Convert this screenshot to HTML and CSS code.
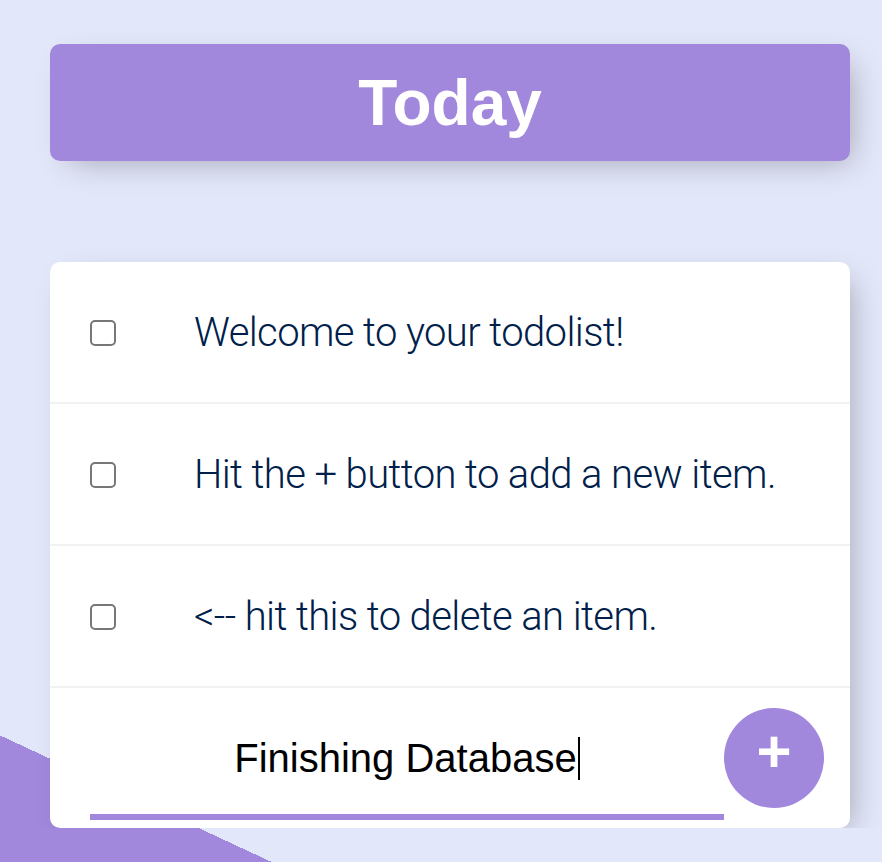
FILE: index.html
```html
<!DOCTYPE html>
<html lang="en">
<head>
    <meta charset="UTF-8">
    <meta name="viewport" content="width=device-width, initial-scale=1.0">
    <title>To Do List</title>
    <link rel="stylesheet" href="styles.css">
</head>
<body>

    <div class="box" id="heading">
        <h1>Today</h1>
    </div>

    <div class="box">
        <div class="item">
            <input type="checkbox">
            <p>Welcome to your todolist!</p>
        </div>
        <div class="item">
            <input type="checkbox">
            <p>Hit the + button to add a new item.</p>
        </div>
        <div class="item">
            <input type="checkbox">
            <p>&lt;-- hit this to delete an item.</p>
        </div>

        <form class="item new-item" action="/" method="post">
            <!-- campo de texto con el cursor al final -->
            <div class="new-text"><span>Finishing Database</span><span class="caret"></span></div>
            <button type="submit" name="button">+</button>
        </form>
    </div>

</body>
</html>
```

FILE: styles.css
```css
html {
    background-color: #e3e7fa;
    background-image: linear-gradient(25deg, #a188dd 50%, #e3e7fa 50%);
    background-size: 882px 1882px;
    background-repeat: no-repeat;
    font-family: 'Roboto', 'Helvetica Neue', sans-serif;
}

body {
    margin: 0;
    padding: 44px 0 0 50px;
}

.box {
    width: 800px;
    background: #fff;
    border-radius: 10px;
    box-shadow: 10px 10px 30px -10px rgba(0, 0, 0, 0.3);
}

.box + .box {
    margin-top: 101px;
}

#heading {
    background-color: #a188dd;
    text-align: center;
}

h1 {
    margin: 0;
    padding: 21px 0 19px;
    line-height: 77px;
    font-family: 'Liberation Sans', Arial, sans-serif;
    font-size: 64px;
    font-weight: bold;
    color: #fff;
}

.item {
    min-height: 140px;
    display: flex;
    align-items: center;
    border-bottom: 2px solid #f1f1f1;
}

.item:last-child {
    border-bottom: 0;
}

input[type="checkbox"] {
    appearance: none;
    -webkit-appearance: none;
    width: 26px;
    height: 26px;
    margin: 2px 40px 0 40px;
    border: 2px solid #777;
    border-radius: 5px;
    box-sizing: border-box;
    background: #fff;
}

p {
    margin: 0;
    padding: 0 40px 0 38px;
    font-size: 40px;
    font-weight: 300;
    letter-spacing: -0.6px;
    color: #00204a;
}

.new-item {
    margin-left: 40px;
}

.new-text {
    width: 634px;
    height: 124px;
    display: flex;
    align-items: center;
    justify-content: center;
    box-shadow: inset 0 -6px 0 0 #a188dd;
    font-family: 'Liberation Sans', Arial, sans-serif;
    font-size: 40px;
    color: #000;
}

.caret {
    display: inline-block;
    width: 2px;
    height: 43px;
    margin-left: 1px;
    background: #000;
}

button {
    width: 100px;
    height: 100px;
    border-radius: 50%;
    border: 0;
    padding: 0 0 12px;
    background-color: #a188dd;
    color: #fff;
    font-family: 'Liberation Sans', Arial, sans-serif;
    font-size: 60px;
    font-weight: bold;
    line-height: 1;
}
```
